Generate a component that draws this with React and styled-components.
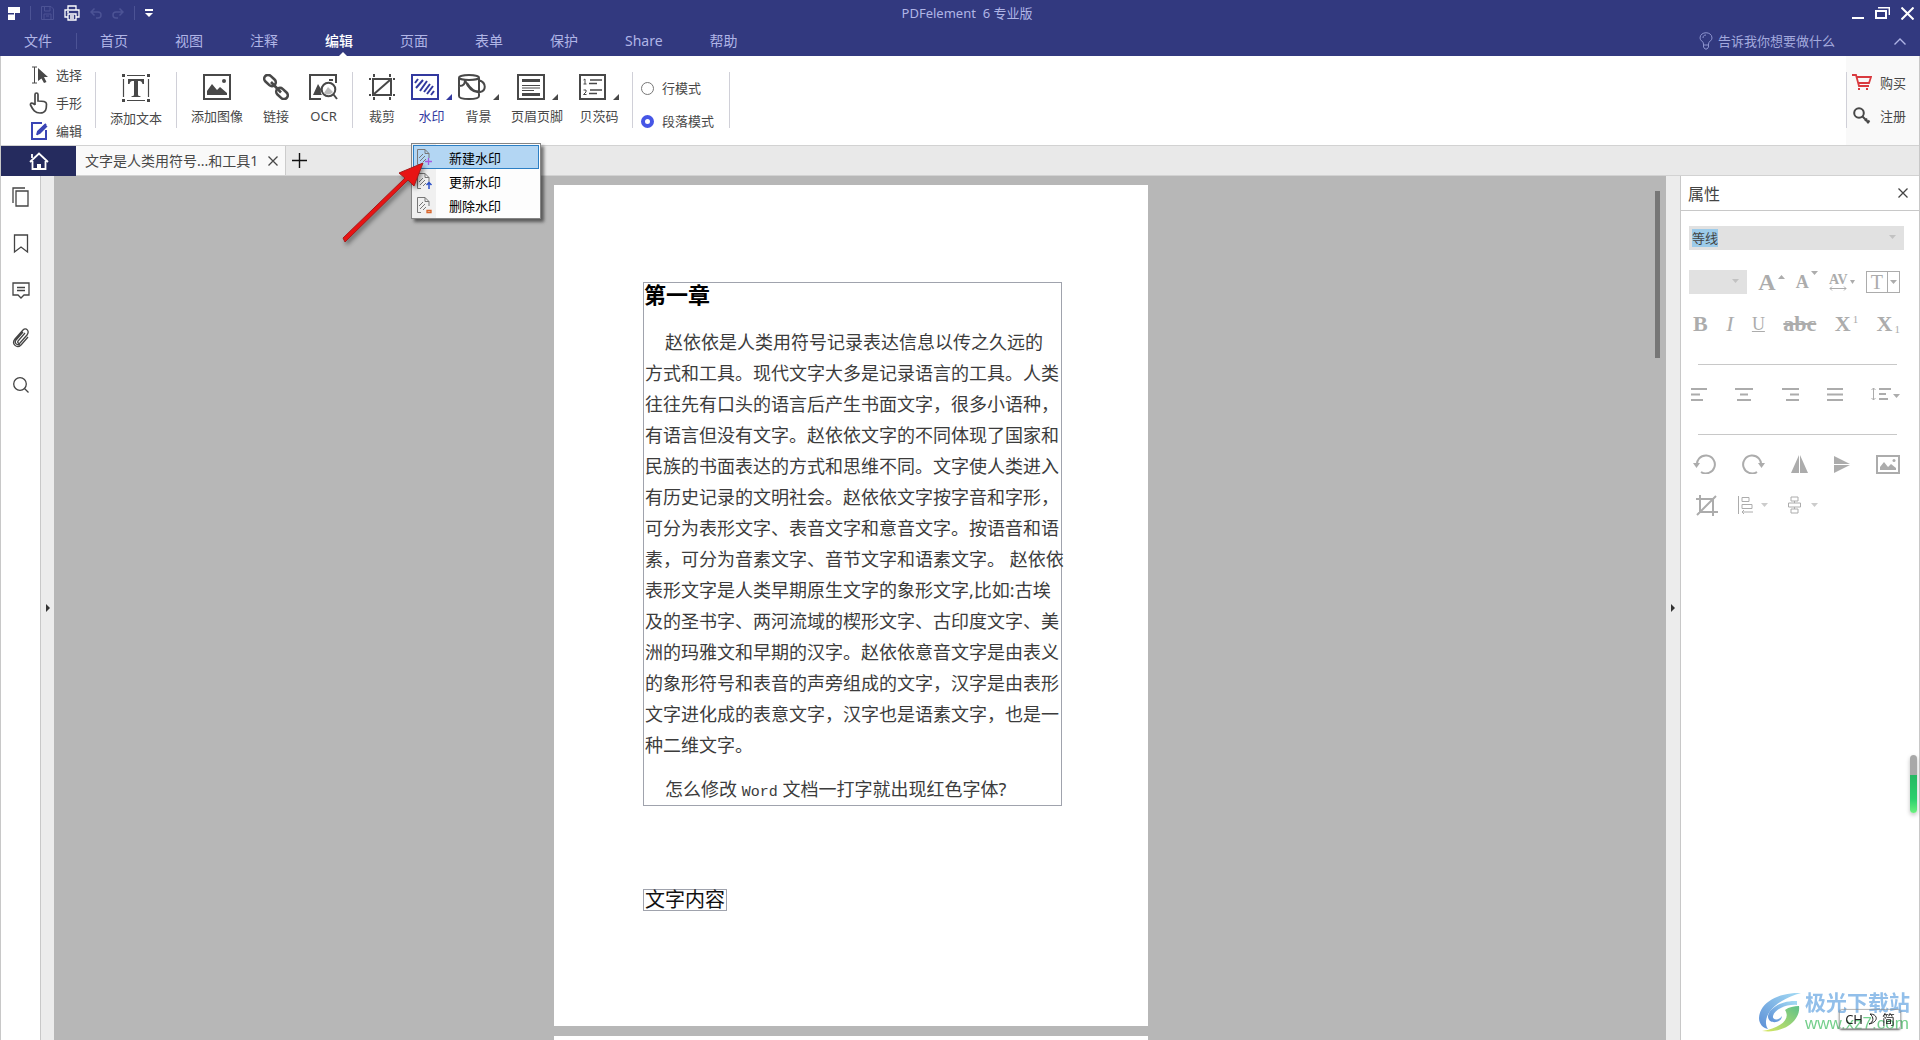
import React from "react";
import styled, { createGlobalStyle } from "styled-components";

const GlobalStyle = createGlobalStyle`
  * {
    box-sizing: border-box;
  }
  body {
    margin: 0;
    font-family: "Noto Sans", "Noto Sans CJK SC", sans-serif;
    font-size: 13px;
    color: #484848;
    background: #fff;
  }
  button, input, select {
    font: inherit;
    color: inherit;
    margin: 0;
    padding: 0;
    border: 0;
    background: none;
  }
  svg {
    display: block;
    flex: none;
  }
`;

const Window = styled.div`
  display: flex;
  flex-direction: column;
  height: 100vh;
  min-width: 1200px;
  overflow: hidden;
`;

/* ---------- title + menu ---------- */
const Header = styled.header`
  background: #32397f;
  color: #b0b5e6;
`;
const TitleBar = styled.div`
  display: grid;
  grid-template-columns: 1fr auto 1fr;
  align-items: center;
  height: 26px;
`;
const QuickAccess = styled.div`
  display: flex;
  align-items: center;
  gap: 10px;
  padding-left: 8px;
`;
const QuickButton = styled.button`
  display: flex;
  color: ${(p) => (p.$dim ? "#4c5395" : "#fff")};
`;
const QuickLine = styled.span`
  width: 1px;
  height: 14px;
  background: #4c5395;
`;
const Title = styled.h1`
  margin: 0;
  padding-left: 14px;
  font-size: 13px;
  font-weight: 400;
  line-height: 20px;
  white-space: pre;
`;
const WindowButtons = styled.div`
  display: flex;
  justify-content: flex-end;
  gap: 10px;
  padding-right: 6px;
`;
const MenuBar = styled.nav`
  display: flex;
  align-items: center;
  height: 30px;
  padding-right: 14px;
`;
const FileMenu = styled.button`
  height: 16px;
  padding: 0 24px;
  border-right: 1px solid #4c5395;
  font-size: 14px;
  line-height: 16px;
`;
const Menus = styled.div`
  display: flex;
  flex: 1;
  gap: 47px;
  padding-left: 23px;
`;
const MenuItem = styled.button`
  position: relative;
  height: 30px;
  font-size: 14px;
  line-height: 30px;
  color: ${(p) => (p.$active ? "#fff" : "inherit")};
  font-weight: ${(p) => (p.$active ? 500 : 400)};

  &::after {
    content: "";
    display: ${(p) => (p.$active ? "block" : "none")};
    position: absolute;
    left: 50%;
    bottom: 0;
    border: 4px solid transparent;
    border-top: 0;
    border-bottom-color: #fff;
  }
`;
const TellMe = styled.label`
  display: flex;
  align-items: center;
  gap: 5px;
  margin-right: 58px;

  input {
    width: 118px;
    line-height: 20px;
    outline: 0;
  }
  input::placeholder {
    color: #a3a9dd;
    opacity: 1;
  }
`;

/* ---------- ribbon ---------- */
const Frame = styled.div`
  display: flex;
  flex-direction: column;
  flex: 1;
  min-height: 0;
  border: 1px solid #c8c8c8;
  border-width: 0 1px;
`;
const Ribbon = styled.div`
  display: flex;
  height: 89px;
  background: #fff;
`;
const Divider = styled.span`
  width: 1px;
  height: 56px;
  margin-top: 16px;
  background: #d0d0d8;
`;
const ModeList = styled.div`
  padding: 5px 13px 0 28px;
`;
const Mode = styled.button`
  display: flex;
  align-items: center;
  gap: 7px;
  height: 28px;
  line-height: 16px;
`;
const Group = styled.div`
  display: flex;
  align-items: flex-start;
  gap: ${(p) => p.$gap || 0}px;
  padding: 18px 14px 0;
`;
const WideGroup = styled(Group)`
  padding: 18px 13px 0 16px;
`;
const ToolWrap = styled.div`
  position: relative;
  margin-left: ${(p) => p.$space || 0}px;
`;
const Tool = styled.button`
  display: flex;
  flex-direction: column;
  align-items: center;
  gap: 8px;
  line-height: 16px;
  white-space: nowrap;
  color: ${(p) => (p.$active ? "#32399f" : "inherit")};
`;
const ToolIcon = styled.span`
  display: flex;
  align-items: flex-end;
  gap: 7px;
`;
const Choices = styled.div`
  display: flex;
  flex-direction: column;
  gap: 17px;
  padding: 24px 15px 0 8px;
`;
const Choice = styled.label`
  display: flex;
  align-items: center;
  gap: 8px;
  line-height: 16px;

  input {
    appearance: none;
    width: 13px;
    height: 13px;
    border: 1px solid #777;
    border-radius: 50%;
    background: #fff;
  }
  input:checked {
    border: 4px solid #4656e6;
  }
`;
const Account = styled.div`
  display: flex;
  margin-left: auto;
  padding-right: 13px;
  background: #f9f9f9;
`;
const AccountList = styled.div`
  display: flex;
  flex-direction: column;
  gap: 16px;
  padding: 18px 0 0 5px;
`;
const AccountButton = styled.button`
  display: flex;
  align-items: center;
  gap: 8px;
  line-height: 16px;
`;

const DropMenu = styled.div`
  position: absolute;
  z-index: 2;
  top: 69px;
  left: 0;
  width: 130px;
  padding: 1px;
  border: 1px solid #858585;
  background: linear-gradient(90deg, #f0f0f0 24px, #fdfdfd 24px);
  box-shadow: 3px 3px 3px rgba(0, 0, 0, 0.5);
`;
const DropItem = styled.button`
  display: flex;
  align-items: center;
  gap: 16px;
  width: 100%;
  height: 24px;
  padding-left: 3px;
  border: 1px solid ${(p) => (p.$active ? "#2c7fc4" : "transparent")};
  background: ${(p) => (p.$active ? "#b3d6f3" : "none")};
  color: #000;
`;
const Pointer = styled.svg`
  position: absolute;
  z-index: 3;
  top: 84px;
  left: -74px;
  pointer-events: none;
  filter: drop-shadow(2px 3px 2px rgba(0, 0, 0, 0.4));
`;

/* ---------- tabs ---------- */
const Tabs = styled.div`
  display: flex;
  height: 31px;
  border-top: 1px solid #d2d2d2;
  border-bottom: 1px solid #d2d2d2;
  background: #e9e9e9;
`;
const HomeTab = styled.button`
  display: flex;
  align-items: center;
  justify-content: center;
  width: 75px;
  height: 30px;
  background: #252b5e;
  color: #fff;
`;
const DocTab = styled.div`
  display: flex;
  align-items: center;
  gap: 10px;
  padding: 0 7px 0 9px;
  border-right: 1px solid #ccc;
  background: #f9f9f9;
  font-size: 14px;
  line-height: 28px;
`;
const PlainButton = styled.button`
  display: flex;
  align-items: center;
`;
const NewTab = styled(PlainButton)`
  padding-left: 6px;
  color: #111;
`;

/* ---------- body ---------- */
const Body = styled.div`
  display: flex;
  flex: 1;
  min-height: 0;
`;
const SideBar = styled.div`
  display: flex;
  flex-direction: column;
  align-items: center;
  gap: 27px;
  width: 40px;
  padding-top: 11px;
  border-right: 1px solid #c8c8c8;
`;
const SideButton = styled.button`
  display: flex;
  color: #444;
`;
const Splitter = styled.button`
  display: flex;
  align-items: center;
  justify-content: center;
  width: ${(p) => p.$width}px;
  background: #ececec;
  color: #333;
`;
const Canvas = styled.main`
  position: relative;
  display: flex;
  flex-direction: column;
  align-items: center;
  gap: 10px;
  flex: 1;
  min-width: 0;
  padding: 9px 18px 0 0;
  background: #b7b7b7;
  overflow: hidden;
`;
const ScrollThumb = styled.div`
  position: absolute;
  top: 15px;
  right: 6px;
  width: 5px;
  height: 167px;
  background: #777;
`;
const Page = styled.article`
  flex: none;
  width: 594px;
  min-height: 841px;
  padding: 97px 86px 0 89px;
  background: #fff;
`;
const TextBox = styled.section`
  border: 1px solid #a0a3ad;
`;
const Chapter = styled.h2`
  margin: 0 0 22px;
  font-size: 22px;
  font-weight: 700;
  line-height: 22px;
  color: #000;
`;
const Paragraph = styled.p`
  margin: 0 0 16px;
  padding-left: 1px;
  font-size: 18px;
  line-height: 31px;
  text-indent: 20px;
  color: #3c3c3c;
  white-space: nowrap;
`;
const LastLine = styled(Paragraph)`
  margin: 0;
  line-height: 24px;
`;
const Word = styled.span`
  font-family: "Liberation Mono", monospace;
  font-size: 15px;
`;
const Caption = styled.p`
  width: max-content;
  margin: 83px 0 0;
  padding: 0 1px;
  border: 1px solid #a0a3ad;
  font-size: 20px;
  line-height: 20px;
  color: #111;
`;

/* ---------- properties ---------- */
const Panel = styled.aside`
  width: 239px;
  border-left: 1px solid #c8c8c8;
  color: #acacac;
`;
const PanelHead = styled.div`
  display: flex;
  align-items: center;
  justify-content: space-between;
  height: 35px;
  padding: 0 11px 0 7px;
  border-bottom: 1px solid #c8c8c8;
  color: #444;

  h2 {
    margin: 0;
    font-size: 16px;
    font-weight: 400;
  }
`;
const PanelBody = styled.div`
  padding: 15px 15px 0 8px;
`;
const SelectBox = styled.label`
  position: relative;
  display: block;
  width: ${(p) => p.$width || "auto"};
  color: #c2c2c2;

  select {
    display: block;
    appearance: none;
    width: 100%;
    height: 24px;
    padding-left: 3px;
    background: ${(p) => (p.$marked ? "linear-gradient(#9ccbea, #9ccbea) 3px 3px / 26px 18px no-repeat #e1e1e1" : "#e1e1e1")};
    color: #444;
  }
  svg {
    position: absolute;
    right: 8px;
    top: 9px;
  }
`;
const Row = styled.div`
  display: flex;
  align-items: center;
  justify-content: ${(p) => (p.$start ? "flex-start" : "space-between")};
  gap: ${(p) => (p.$start ? 20 : 0)}px;
  height: 24px;
  margin-top: ${(p) => p.$top}px;
  padding: 0 4px 0 ${(p) => p.$left || 0}px;
`;
const Format = styled.button`
  display: flex;
  align-items: ${(p) => p.$align || "center"};
  gap: 2px;
  font-family: "Liberation Serif", serif;
  font-size: ${(p) => p.$size || 22}px;
  font-weight: ${(p) => (p.$light ? 400 : 700)};
  font-style: ${(p) => (p.$italic ? "italic" : "normal")};
  line-height: 22px;
  text-decoration: ${(p) => p.$line || "none"};

  small {
    font-size: 11px;
    font-weight: 400;
    line-height: 12px;
  }
`;
const Kerning = styled.span`
  display: flex;
  flex-direction: column;
  align-items: center;
  font-size: 14px;
  line-height: 13px;
`;
const Boxed = styled.span`
  display: flex;
  align-items: center;
  border: 1px solid #acacac;
  height: 22px;

  span {
    padding: 0 4px;
    border-right: 1px solid #acacac;
    line-height: 20px;
  }
  svg {
    margin: 0 2px;
  }
`;
const Rule = styled.hr`
  height: 1px;
  margin: ${(p) => p.$top}px 7px 0 9px;
  border: 0;
  background: #c8c8c8;
`;

/* ---------- floating bits ---------- */
const Meter = styled.div`
  position: fixed;
  right: 3px;
  top: 755px;
  width: 7px;
  height: 58px;
  border-radius: 4px;
  background: linear-gradient(#a8a8a8 20px, #25b863 20px, #2bd06c 44px, #6cf07f);
  box-shadow: 0 2px 4px rgba(0, 0, 0, 0.25);
`;
const Brand = styled.div`
  position: fixed;
  right: 10px;
  bottom: 6px;
  display: flex;
  align-items: center;
  gap: 4px;
`;
const BrandName = styled.div`
  font-size: 21px;
  font-weight: 700;
  line-height: 24px;
  color: #92bfea;

  span {
    display: block;
    font-family: "Liberation Sans", sans-serif;
    font-size: 17px;
    font-weight: 400;
    line-height: 20px;
    color: #74cf8c;
  }
`;
const Ime = styled.div`
  position: fixed;
  right: 19px;
  bottom: 11px;
  display: flex;
  align-items: center;
  gap: 5px;
  padding: 0 5px;
  border: 1px solid rgba(140, 140, 140, 0.6);
  border-radius: 3px;
  box-shadow: 0 1px 2px rgba(0, 0, 0, 0.6);
  font-size: 13px;
  line-height: 18px;
  color: #222;
`;

function Svg({ w, h, children, ...rest }) {
  return (
    <svg width={w} height={h} viewBox={`0 0 ${w} ${h}`} fill="none" stroke="currentColor" {...rest}>
      {children}
    </svg>
  );
}

const Down = ({ w = 7 }) => (
  <Svg w={w} h={4} stroke="none">
    <path d={`M0 0H${w}L${w / 2} 4z`} fill="currentColor" />
  </Svg>
);
const Corner = () => (
  <Svg w={6} h={6} stroke="none">
    <path d="M6 0V6H0z" fill="currentColor" />
  </Svg>
);
const Cross = ({ s = 10, width = 1.3 }) => (
  <Svg w={s} h={s} strokeWidth={width}>
    <path d={`M.5 .5L${s - 0.5} ${s - 0.5}M${s - 0.5} .5L.5 ${s - 0.5}`} />
  </Svg>
);

const AddTextIcon = () => (
  <Svg w={28} h={28} strokeWidth="1.2">
    <path d="M5 1.5H23M5 26.5H23M1.5 5V23M26.5 5V23" />
    <path d="M0 0h3v3H0zM25 0h3v3h-3zM0 25h3v3H0zM25 25h3v3h-3z" fill="currentColor" stroke="none" />
    <path d="M6 5H22V10H20.500C20 7.500 19 7 16 7V20C16 22 16.500 22 18.500 22.300V23H9.500V22.300C11.500 22 12 22 12 20V7C9 7 8 7.500 7.500 10H6z" fill="currentColor" stroke="none" />
  </Svg>
);
const ImageIcon = () => (
  <Svg w={28} h={26} strokeWidth="2">
    <path d="M1 1H27V25H1z" />
    <path d="M4 21V17L9 10L14 16L17 13L24 19V21z" fill="currentColor" stroke="none" />
    <circle cx="21" cy="7" r="2" fill="currentColor" stroke="none" />
  </Svg>
);
const LinkIcon = () => (
  <Svg w={26} h={26} strokeWidth="2.600">
    <rect x="-6.500" y="-3.800" width="13" height="7.600" rx="3.800" transform="translate(7 6.500) rotate(43)" />
    <rect x="-6.500" y="-3.800" width="13" height="7.600" rx="3.800" transform="translate(19 19.500) rotate(43)" />
    <path d="M8 8L18 18.500" />
  </Svg>
);
const OcrIcon = () => (
  <Svg w={29} h={26} strokeWidth="2">
    <path d="M12 25H1V1H27V9" />
    <path d="M4 21L9 10L12 15C11.500 18 12 20 13 21z" fill="currentColor" stroke="none" />
    <circle cx="19.500" cy="15.500" r="6.800" />
    <path d="M15 19L19 13L24 18C22 21 17 21 15 19z" fill="#bbb" stroke="none" />
    <path d="M24.500 20.500L28 25M20 6H24" />
  </Svg>
);
const CropIcon = () => (
  <Svg w={26} h={26} strokeWidth="2">
    <path d="M4 5H22V21H4zM5 20L21 6" />
    <path d="M0 5H2M24 5H26M0 21H2M24 21H26M5 0V3M21 0V3M5 23V26M21 23V26" />
  </Svg>
);
const WatermarkIcon = () => (
  <Svg w={28} h={26} strokeWidth="2">
    <path d="M1 1H27V25H1z" />
    <path d="M4 9L7 5M5 14L12 6M9 17L16 7M13 18L19 10M16 20L22 12M20 21L23 17" />
  </Svg>
);
const BackgroundIcon = () => (
  <Svg w={28} h={26} strokeWidth="2">
    <ellipse cx="11" cy="3.500" rx="10" ry="2.500" />
    <path d="M1 4V22C1 26 21 26 21 22V4M1 12C6 12 7 10 7 5M7 6C10 14 15 19 22 18C28 17 29 9 21 6M9 9C13 16 18 18 20 17" />
  </Svg>
);
const HeaderIcon = () => (
  <Svg w={28} h={26} strokeWidth="2">
    <path d="M1 1H27V25H1z" />
    <path d="M5 6.500H23M5 20.500H23" strokeWidth="3" />
    <path d="M5 11.500H23M5 14H23M5 16.500H17" strokeWidth="1" />
  </Svg>
);
const BatesIcon = () => (
  <Svg w={27} h={26} strokeWidth="2">
    <path d="M1 1H26V25H1z" />
    <path d="M4.500 6L6 5V10M4.500 10H7.500M4.500 16H7V18L4.500 20.500H7.500" strokeWidth="1" />
    <path d="M11 6H23M10 9.500H18M11 16H23M10 19.500H18" strokeWidth="1.600" />
  </Svg>
);
const SheetIcon = ({ kind }) => (
  <Svg w={16} h={17} stroke="#777">
    <path d="M4 15.500H.5V.5H8L12 4.500V9M8 .5V4.500H12M2 9L6 5M3 12L8 7M6 13L9 10" />
    {kind === "add" && <path d="M8 12.500H15M11.500 9V16" stroke="#a35be0" strokeWidth="1.300" />}
    {kind === "update" && <path d="M12 16V10M9.500 12L12 9.500L14.500 12" stroke="#2b50c8" strokeWidth="1.500" />}
    {kind === "remove" && <path d="M10 13.500H14V15.500H10z" stroke="#d9652b" strokeWidth="1.300" />}
  </Svg>
);

const MENUS = ["首页", "视图", "注释", "编辑", "页面", "表单", "保护", "Share", "帮助"];

const LINES = [
  "赵依依是人类用符号记录表达信息以传之久远的",
  "方式和工具。现代文字大多是记录语言的工具。人类",
  "往往先有口头的语言后产生书面文字，很多小语种，",
  "有语言但没有文字。赵依依文字的不同体现了国家和",
  "民族的书面表达的方式和思维不同。文字使人类进入",
  "有历史记录的文明社会。赵依依文字按字音和字形，",
  "可分为表形文字、表音文字和意音文字。按语音和语",
  "素，可分为音素文字、音节文字和语素文字。 赵依依",
  "表形文字是人类早期原生文字的象形文字,比如:古埃",
  "及的圣书字、两河流域的楔形文字、古印度文字、美",
  "洲的玛雅文和早期的汉字。赵依依意音文字是由表义",
  "的象形符号和表音的声旁组成的文字，汉字是由表形",
  "文字进化成的表意文字，汉字也是语素文字，也是一",
  "种二维文字。",
];

function TopBar() {
  return (
    <Header>
      <TitleBar>
        <QuickAccess>
          <Svg w={12} h={13} stroke="none">
            <path d="M0 0H12V6H7V13H0V7.500H6V6H0z" fill="#fff" />
          </Svg>
          <QuickLine />
          <QuickButton $dim aria-label="保存">
            <Svg w={13} h={14}><path d="M.5 .5H10L12.500 3V13.500H.5zM3.500 1V5H9V1M3 13V8H10V13M5 10H8" /></Svg>
          </QuickButton>
          <QuickButton aria-label="打印">
            <Svg w={16} h={16} strokeWidth="1.300">
              <path d="M4 5V1H12V5M4 12H1V5H15V12H12M4 9H12V15H4zM6 11H10M6 13H10M3 7H5" />
            </Svg>
          </QuickButton>
          <QuickButton $dim aria-label="撤销">
            <Svg w={12} h={11} strokeWidth="1.500"><path d="M4.500 .5L1 4L4.500 7.500M1 4H8C12 4 12 10 8 10H6" /></Svg>
          </QuickButton>
          <QuickButton $dim aria-label="重做">
            <Svg w={12} h={11} strokeWidth="1.500"><path d="M7.500 .5L11 4L7.500 7.500M11 4H4C0 4 0 10 4 10H6" /></Svg>
          </QuickButton>
          <QuickLine />
          <QuickButton aria-label="自定义">
            <Svg w={8} h={8} stroke="none"><path d="M0 0H8V2H0zM0 4H8L4 8z" fill="#fff" /></Svg>
          </QuickButton>
        </QuickAccess>
        <Title>{"PDFelement  6 专业版"}</Title>
        <WindowButtons>
          <QuickButton aria-label="最小化">
            <Svg w={13} h={13} strokeWidth="2"><path d="M0 11H12" /></Svg>
          </QuickButton>
          <QuickButton aria-label="还原">
            <Svg w={16} h={13}>
              <path d="M1 4H11V11H1z" strokeWidth="2" />
              <path d="M3 .7H14.300V8" strokeWidth="1.400" />
            </Svg>
          </QuickButton>
          <QuickButton aria-label="关闭"><Cross s={13} width={2} /></QuickButton>
        </WindowButtons>
      </TitleBar>
      <MenuBar>
        <FileMenu>文件</FileMenu>
        <Menus>
          {MENUS.map((m) => (
            <MenuItem key={m} $active={m === "编辑"}>{m}</MenuItem>
          ))}
        </Menus>
        <TellMe>
          <Svg w={14} h={18} stroke="#8d94cf">
            <path d="M4.500 12C4.500 9 1 9 1 6C1 -1 13 -1 13 6C13 9 9.500 9 9.500 12V15L8 17H6L4.500 15zM4 6C4 4 5 3 7 3M5 13H9" />
          </Svg>
          <input aria-label="搜索" placeholder="告诉我你想要做什么" />
        </TellMe>
        <PlainButton aria-label="收起">
          <Svg w={12} h={7} strokeWidth="1.400"><path d="M.5 6.500L6 1L11.500 6.500" /></Svg>
        </PlainButton>
      </MenuBar>
    </Header>
  );
}

function DropTool({ icon, label, space, active, children }) {
  return (
    <ToolWrap $space={space}>
      <Tool $active={active}>
        <ToolIcon>
          {icon}
          <Corner />
        </ToolIcon>
        {label}
      </Tool>
      {children}
    </ToolWrap>
  );
}

function Toolbar() {
  return (
    <Ribbon>
      <ModeList>
        <Mode>
          <Svg w={20} h={18}>
            <path d="M3 1H8M5.500 1V17M3 17H8" />
            <path d="M9 2L19 11H15L17.500 16L15 17L12.500 12.500L9 15z" fill="currentColor" stroke="none" />
          </Svg>
          选择
        </Mode>
        <Mode>
          <Svg w={20} h={22} strokeWidth="1.700">
            <path d="M6 13V2.500C6 .5 9 .5 9 2.500V9C14 9 17.500 9.500 17.500 12C17.500 17 17 21 11 21C6 21 4 18 1.500 13C1 11 3.500 10 6 13" />
          </Svg>
          手形
        </Mode>
        <Mode>
          <Svg w={20} h={18} stroke="#3a45b5" strokeWidth="2">
            <path d="M13 1H3V17H17V8M8 13L9 9.500L17 2" />
            <path d="M8 13L9 9L16 2L18.500 4.500L11 12z" fill="#3a45b5" stroke="none" />
          </Svg>
          编辑
        </Mode>
      </ModeList>
      <Divider />
      <Group>
        <Tool><AddTextIcon />添加文本</Tool>
      </Group>
      <Divider />
      <Group $gap={20}>
        <Tool><ImageIcon />添加图像</Tool>
        <Tool><LinkIcon />链接</Tool>
        <Tool><OcrIcon />OCR</Tool>
      </Group>
      <Divider />
      <WideGroup>
        <Tool><CropIcon />裁剪</Tool>
        <DropTool icon={<WatermarkIcon />} label="水印" space={16} active>
          <DropMenu>
            <DropItem $active><SheetIcon kind="add" />新建水印</DropItem>
            <DropItem><SheetIcon kind="update" />更新水印</DropItem>
            <DropItem><SheetIcon kind="remove" />删除水印</DropItem>
          </DropMenu>
          <Pointer width="90" height="90" viewBox="0 0 90 90">
            <path d="M6 80L8 84L71 22L77 28L86 5L62 15L68 20z" fill="#e81414" stroke="#a51b1b" strokeWidth="1" />
          </Pointer>
        </DropTool>
        <DropTool icon={<BackgroundIcon />} label="背景" space={6} />
        <DropTool icon={<HeaderIcon />} label="页眉页脚" space={12} />
        <DropTool icon={<BatesIcon />} label="贝茨码" space={16} />
      </WideGroup>
      <Divider />
      <Choices>
        <Choice><input type="radio" name="mode" />行模式</Choice>
        <Choice><input type="radio" name="mode" defaultChecked />段落模式</Choice>
      </Choices>
      <Divider />
      <Account>
        <Divider />
        <AccountList>
          <AccountButton>
            <Svg w={20} h={17} stroke="#d93a3f" strokeWidth="1.800">
              <path d="M0 1H4L7 12H17M5 3H19L17 9H6" />
              <path d="M6 14h2v2H6zM14 14h2v2h-2z" fill="#d93a3f" stroke="none" />
            </Svg>
            购买
          </AccountButton>
          <AccountButton>
            <Svg w={20} h={17} strokeWidth="2">
              <circle cx="7" cy="6" r="4.800" />
              <path d="M10.500 9.500L17 16M13 14L15 11.500M15 16L17.500 13.500" />
            </Svg>
            注册
          </AccountButton>
        </AccountList>
      </Account>
    </Ribbon>
  );
}

function Properties() {
  return (
    <Panel>
      <PanelHead>
        <h2>属性</h2>
        <PlainButton aria-label="关闭属性"><Cross /></PlainButton>
      </PanelHead>
      <PanelBody>
        <SelectBox $marked>
          <select aria-label="字体"><option>等线</option></select>
          <Down />
        </SelectBox>
        <Row $top={20}>
          <SelectBox $width="58px">
            <select aria-label="字号"><option></option></select>
            <Down />
          </SelectBox>
          <Format $size={24} $align="flex-start">
            A
            <Svg w={7} h={8} stroke="none"><path d="M0 8L3.500 4L7 8z" fill="currentColor" /></Svg>
          </Format>
          <Format $size={18} $align="flex-start">
            A
            <Down />
          </Format>
          <Format>
            <Kerning>
              AV
              <Svg w={18} h={5}><path d="M1 2.500H17M3 .5L1 2.500L3 4.500M15 .5L17 2.500L15 4.500" /></Svg>
            </Kerning>
            <Down w={5} />
          </Format>
          <Format $size={20} $light>
            <Boxed><span>T</span><Down /></Boxed>
          </Format>
        </Row>
        <Row $top={18} $left={4}>
          <Format>B</Format>
          <Format $italic $light>I</Format>
          <Format $size={18} $light $line="underline">U</Format>
          <Format $line="line-through">abc</Format>
          <Format $align="flex-start">X<small>1</small></Format>
          <Format $align="flex-end">X<small>1</small></Format>
        </Row>
        <Rule $top={28} />
        <Row $top={17} $left={2}>
          <PlainButton aria-label="左对齐">
            <Svg w={16} h={13} strokeWidth="2"><path d="M0 1H16M0 6.500H9M0 12H12" /></Svg>
          </PlainButton>
          <PlainButton aria-label="居中">
            <Svg w={18} h={13} strokeWidth="2"><path d="M0 1H18M5 6.500H13M2 12H16" /></Svg>
          </PlainButton>
          <PlainButton aria-label="右对齐">
            <Svg w={17} h={13} strokeWidth="2"><path d="M0 1H17M8 6.500H17M4 12H17" /></Svg>
          </PlainButton>
          <PlainButton aria-label="两端对齐">
            <Svg w={16} h={13} strokeWidth="2"><path d="M0 1H16M0 6.500H16M0 12H16" /></Svg>
          </PlainButton>
          <PlainButton aria-label="行距">
            <Svg w={29} h={14}>
              <path d="M2.500 1V13M.5 3L2.500 1L4.500 3M.5 11L2.500 13L4.500 11" />
              <path d="M8 2H20M8 7H15M8 12H17" strokeWidth="2" />
              <path d="M22 7H29L25.500 11z" fill="currentColor" stroke="none" />
            </Svg>
          </PlainButton>
        </Row>
        <Rule $top={28} />
        <Row $top={17} $left={4}>
          <PlainButton aria-label="向左旋转">
            <Svg w={23} h={20} strokeWidth="2">
              <path d="M4 12A9 9 0 1 1 8 18" />
              <path d="M0 9H7L3.500 14z" fill="currentColor" stroke="none" />
            </Svg>
          </PlainButton>
          <PlainButton aria-label="向右旋转">
            <Svg w={23} h={20} strokeWidth="2">
              <path d="M19 12A9 9 0 1 0 15 18" />
              <path d="M16 9H23L19.500 14z" fill="currentColor" stroke="none" />
            </Svg>
          </PlainButton>
          <PlainButton aria-label="水平翻转">
            <Svg w={17} h={18} stroke="none"><path d="M8 0V18H0zM9 0L17 18H9z" fill="currentColor" /></Svg>
          </PlainButton>
          <PlainButton aria-label="垂直翻转">
            <Svg w={16} h={17} stroke="none"><path d="M0 0L16 8H0zM0 9H16L0 17z" fill="currentColor" /></Svg>
          </PlainButton>
          <PlainButton aria-label="替换图像">
            <Svg w={24} h={19} strokeWidth="2">
              <path d="M1 1H23V18H1z" />
              <path d="M4 15V12L8 7L12 12L15 9L20 13V15z" fill="currentColor" stroke="none" />
              <circle cx="18" cy="5.500" r="1.500" fill="currentColor" stroke="none" />
            </Svg>
          </PlainButton>
        </Row>
        <Row $top={17} $left={7} $start>
          <PlainButton aria-label="裁剪">
            <Svg w={22} h={21} strokeWidth="2"><path d="M0 4H17V21M4 0V17H22M1 20L20 1" /></Svg>
          </PlainButton>
          <PlainButton aria-label="对齐">
            <Svg w={30} h={18}>
              <path d="M.5 0V18M4 1.500H11V5.500H4zM4 8.500H14V12.500H4zM4 16H15M6 14L4 16L6 18" />
              <path d="M23 7H30L26.500 11z" fill="#ccc" stroke="none" />
            </Svg>
          </PlainButton>
          <PlainButton aria-label="分布">
            <Svg w={30} h={18}>
              <path d="M3 1H10V5H3zM.5 7H12.500V11H.5zM3 13H10V17H3zM6.500 5V7M6.500 11V13" />
              <path d="M23 7H30L26.500 11z" fill="#ccc" stroke="none" />
            </Svg>
          </PlainButton>
        </Row>
      </PanelBody>
    </Panel>
  );
}

function App() {
  return (
    <Window>
      <GlobalStyle />
      <TopBar />
      <Frame>
        <Toolbar />
        <Tabs>
          <HomeTab aria-label="主页">
            <Svg w={20} h={18} strokeWidth="1.800">
              <path d="M1 10L10 1.500L19 10M3.500 9V17H16.500V9M3 2V6" />
              <path d="M8 12h4v5H8z" fill="currentColor" stroke="none" />
            </Svg>
          </HomeTab>
          <DocTab>
            文字是人类用符号...和工具1
            <PlainButton aria-label="关闭标签"><Cross /></PlainButton>
          </DocTab>
          <NewTab aria-label="新标签">
            <Svg w={15} h={15} strokeWidth="1.400"><path d="M0 7.500H15M7.500 0V15" /></Svg>
          </NewTab>
        </Tabs>
        <Body>
          <SideBar>
            <SideButton aria-label="缩略图">
              <Svg w={18} h={20} strokeWidth="1.300"><path d="M4 4H16V19H4zM1 16V1H13" /></Svg>
            </SideButton>
            <SideButton aria-label="书签">
              <Svg w={18} h={20} strokeWidth="1.300"><path d="M2.500 1H15.500V18L9 13L2.500 18z" /></Svg>
            </SideButton>
            <SideButton aria-label="批注">
              <Svg w={18} h={20} strokeWidth="1.300"><path d="M1 2H17V14H12L9 17L6 14H1zM5 6.500H13M5 9.500H13" /></Svg>
            </SideButton>
            <SideButton aria-label="附件">
              <Svg w={18} h={20} strokeWidth="1.300">
                <path d="M13 5L6 13C5 15 7 16 8 15L15 7C18 3 14 -1 11 2L3 11C-1 16 5 21 9 17L16 9M11 4L4 12C2 15 5 18 8 16" />
              </Svg>
            </SideButton>
            <SideButton aria-label="搜索">
              <Svg w={18} h={20} strokeWidth="1.300"><path d="M12.500 13.500L16.500 17.500" /><circle cx="8" cy="9" r="6.300" /></Svg>
            </SideButton>
          </SideBar>
          <Splitter $width={13} aria-label="展开左栏">
            <Svg w={4} h={8} stroke="none"><path d="M0 0L4 4L0 8z" fill="currentColor" /></Svg>
          </Splitter>
          <Canvas>
            <Page>
              <TextBox>
                <Chapter>第一章</Chapter>
                <Paragraph>
                  {LINES.map((line) => (
                    <React.Fragment key={line}>
                      {line}
                      <br />
                    </React.Fragment>
                  ))}
                </Paragraph>
                <LastLine>
                  怎么修改 <Word>Word</Word> 文档一打字就出现红色字体?
                </LastLine>
              </TextBox>
              <Caption>文字内容</Caption>
            </Page>
            <Page />
            <ScrollThumb />
          </Canvas>
          <Splitter $width={14} aria-label="收起右栏">
            <Svg w={4} h={8} stroke="none"><path d="M0 0L4 4L0 8z" fill="currentColor" /></Svg>
          </Splitter>
          <Properties />
        </Body>
      </Frame>
      <Meter />
      <Brand>
        <svg width="42" height="40" viewBox="0 0 42 40">
          <defs>
            <linearGradient id="blue" x1="0" y1="1" x2="1" y2="0">
              <stop offset="0" stopColor="#5c8fd6" />
              <stop offset="1" stopColor="#a5dcf5" />
            </linearGradient>
            <linearGradient id="green" x1="0" y1="1" x2="1" y2="0">
              <stop offset="0" stopColor="#dbe860" />
              <stop offset="1" stopColor="#5cc08a" />
            </linearGradient>
          </defs>
          <path d="M42 1C22 0 1 9 0 26C0 32 4 36 9 37C3 28 10 10 42 1z" fill="url(#blue)" />
          <path d="M38 9C22 8 9 17 9 25C10 33 23 31 23 24C20 29 13 28 14 24C16 17 28 12 38 13z" fill="url(#blue)" />
          <path d="M40 14C42 28 26 42 3 39C22 36 32 27 26 18C30 15 35 14 40 14z" fill="url(#green)" />
        </svg>
        <BrandName>
          极光下载站
          <span>www.xz7.com</span>
        </BrandName>
      </Brand>
      <Ime>
        CH
        <Svg w={9} h={12}><path d="M2 1C10 1 11 9 1 11C6 9 6 4 2 1z" /></Svg>
        简
      </Ime>
    </Window>
  );
}

export default App;
